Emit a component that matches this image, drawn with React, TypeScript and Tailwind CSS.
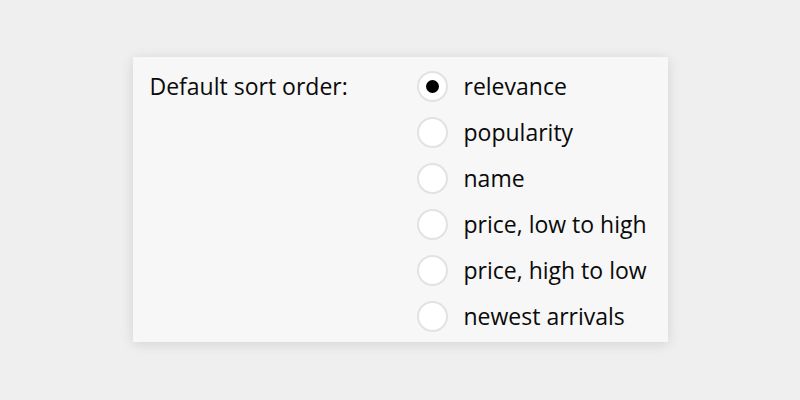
import { useState } from "react";

const OPCOES = [
  "relevance",
  "popularity",
  "name",
  "price, low to high",
  "price, high to low",
  "newest arrivals",
];

export default function App() {
  const [ordem, setOrdem] = useState("relevance");

  return (
    <div
      className="flex h-[400px] w-[800px] items-start justify-center bg-[#efefef] pt-[57px] text-[#0a0a0a]"
      style={{ fontFamily: '"Open Sans", "Noto Sans", sans-serif' }}
    >
      <div className="flex h-[285px] w-[535px] bg-[#f7f7f7] pl-[17px] shadow-[0_2px_12px_rgba(0,0,0,0.12)]">
        <div className="w-[267px] pt-[6px]">
          <div className="flex h-[46px] items-center text-[23px]">Default sort order:</div>
        </div>
        <div className="flex flex-col pt-[6px]">
          {OPCOES.map((op) => (
            <button
              key={op}
              type="button"
              onClick={() => setOrdem(op)}
              className="flex h-[46px] items-center gap-[16px] text-left text-[23px]"
            >
              <span className="flex h-[31px] w-[31px] items-center justify-center rounded-full border-2 border-[#e2e2e2] bg-white">
                {ordem === op && <span className="h-[13px] w-[13px] rounded-full bg-black" />}
              </span>
              <span>{op}</span>
            </button>
          ))}
        </div>
      </div>
    </div>
  );
}
